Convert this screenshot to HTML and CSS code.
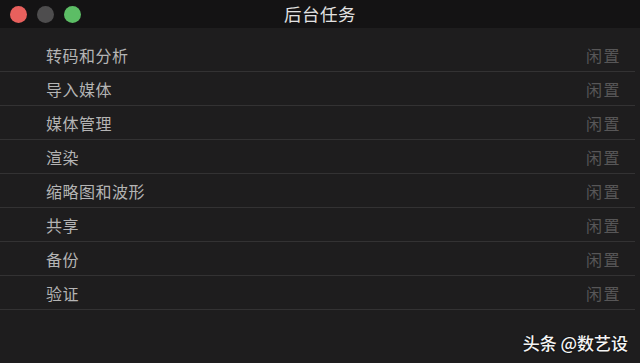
FILE: index.html
```html
<!DOCTYPE html>
<html lang="zh">
<head>
<meta charset="utf-8">
<link rel="stylesheet" href="styles.css">
</head>
<body>
<div class="window">
  <div class="titlebar">
    <div class="lights">
      <span class="light red"></span>
      <span class="light gray"></span>
      <span class="light green"></span>
    </div>
    <div class="title">后台任务</div>
  </div>
  <ul class="tasks">
    <li class="task"><span class="name">转码和分析</span><span class="status">闲置</span></li>
    <li class="task"><span class="name">导入媒体</span><span class="status">闲置</span></li>
    <li class="task"><span class="name">媒体管理</span><span class="status">闲置</span></li>
    <li class="task"><span class="name">渲染</span><span class="status">闲置</span></li>
    <li class="task"><span class="name">缩略图和波形</span><span class="status">闲置</span></li>
    <li class="task"><span class="name">共享</span><span class="status">闲置</span></li>
    <li class="task"><span class="name">备份</span><span class="status">闲置</span></li>
    <li class="task"><span class="name">验证</span><span class="status">闲置</span></li>
  </ul>
  <div class="footer">
    <span class="watermark">头条 @数艺设</span>
  </div>
</div>
</body>
</html>
```
FILE: styles.css
```css
html, body {
  margin: 0;
  padding: 0;
  background: #1e1d1e;
}
body {
  width: 640px;
  height: 363px;
  overflow: hidden;
  font-family: "Noto Sans CJK SC", "Noto Sans", sans-serif;
}
.window {
  display: flex;
  flex-direction: column;
  height: 363px;
}
.titlebar {
  height: 28px;
  background: #141314;
  display: flex;
  align-items: center;
  justify-content: center;
  position: relative;
  flex-shrink: 0;
}
.lights {
  position: absolute;
  left: 10px;
  top: 6px;
  display: flex;
  gap: 10px;
}
.light {
  width: 17px;
  height: 17px;
  border-radius: 50%;
  display: block;
}
.red { background: #e8605d; }
.gray { background: #4e4d4e; }
.green { background: #5cbd65; }
.title {
  color: #e2e2e2;
  font-size: 17.5px;
  line-height: 28px;
  letter-spacing: 0.5px;
}
.tasks {
  list-style: none;
  margin: 0;
  padding: 10px 5px 0 0;
}
.task {
  height: 33px;
  border-bottom: 1px solid #333233;
  display: flex;
  align-items: center;
  justify-content: space-between;
  padding: 0 14px 0 46px;
}
.name {
  color: #b4b4b4;
  font-size: 16px;
  letter-spacing: 0.5px;
}
.status {
  color: #575657;
  font-size: 16px;
  letter-spacing: 1.5px;
}
.footer {
  flex: 1;
  display: flex;
  justify-content: flex-end;
  align-items: flex-end;
  padding: 0 12px 8px 0;
}
.watermark {
  color: #f4f4f4;
  font-size: 17px;
  font-weight: 500;
  text-shadow: 0 0 2px #000;
}
```
